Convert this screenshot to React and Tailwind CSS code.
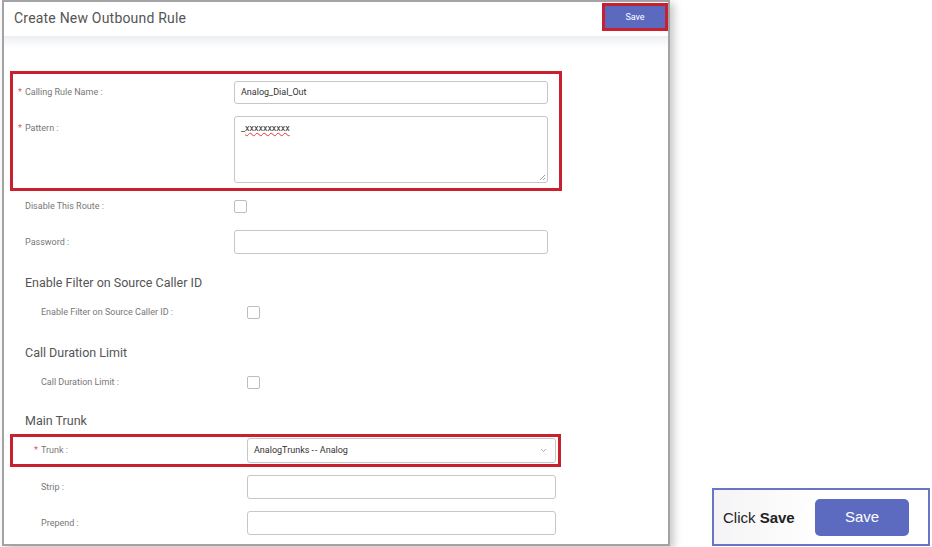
import React from "react";

const F = { fontFamily: "Roboto, 'Noto Sans', sans-serif" };

function Star() {
  return <span className="text-[#e5536b] mr-[3px] text-[9px]">*</span>;
}

function Input({ w = "w-[314px]", h = "h-[24px]", children }) {
  return (
    <div className={`${w} ${h} border border-[#c6c6c6] rounded-[3px] bg-white flex items-center px-[6px] text-[9px] text-[#333]`}>
      {children}
    </div>
  );
}

function Check() {
  return <div className="w-[13px] h-[13px] border border-[#bdbdbd] rounded-[2px] bg-white" />;
}

function Heading({ children, mt }) {
  return (
    <div className={`${mt} h-[20px] flex items-center pl-[21px] text-[12.5px] text-[#555]`}>{children}</div>
  );
}

export default function App() {
  return (
    <div className="w-[932px] h-[547px] bg-white flex overflow-hidden" style={F}>
      <div className="ml-[2px] w-[668px] h-[546px] border-2 border-[#a3a3a3] bg-white shadow-[4px_3px_8px_rgba(0,0,0,0.22)] flex flex-col overflow-hidden shrink-0">
        {/* header */}
        <div className="h-[34px] flex items-start justify-between">
          <div className="pl-[10px] pt-[6px] text-[14px] text-[#555] tracking-[0.2px]">Create New Outbound Rule</div>
          <div className="mt-[1px] w-[66px] h-[28px] border-[3px] border-[#c8202f] bg-white">
            <div className="w-full h-full bg-[#5b6abf] flex items-center justify-center text-white text-[9px] pt-[2px]">Save</div>
          </div>
        </div>
        <div className="h-[12px] bg-gradient-to-b from-[#eceef2] to-white" />

        {/* red box 1 */}
        <div className="mt-[23px] ml-[6px] w-[552px] border-[3px] border-[#c8202f] pt-[7px] pb-[5px] flex flex-col gap-[12px]">
          <div className="flex items-center h-[23px]">
            <div className="pl-[5px] w-[221px] text-[9px] text-[#777] flex items-center pt-[1px]"><Star />Calling Rule Name :</div>
            <Input h="h-[23px]">Analog_Dial_Out</Input>
          </div>
          <div className="flex items-start h-[67px]">
            <div className="pl-[5px] w-[221px] text-[9px] text-[#777] flex items-center pt-[6px]"><Star />Pattern :</div>
            <div className="relative w-[314px] h-[67px] border border-[#c6c6c6] rounded-[3px] bg-white px-[6px] pt-[5px] text-[9px] text-[#333]">
              _<span className="underline decoration-wavy decoration-[#e03a3a] decoration-1">xxxxxxxxxx</span>
              <svg className="absolute right-[1px] bottom-[1px]" width="7" height="7" viewBox="0 0 7 7">
                <path d="M6 1 L1 6 M6 4 L4 6" stroke="#888" strokeWidth="0.8" />
              </svg>
            </div>
          </div>
        </div>

        {/* disable */}
        <div className="mt-[3px] h-[24px] flex items-center">
          <div className="pl-[21px] w-[230px] text-[9px] text-[#777] pt-[1px]">Disable This Route :</div>
          <Check />
        </div>
        {/* password */}
        <div className="mt-[12px] h-[24px] flex items-center">
          <div className="pl-[21px] w-[230px] text-[9px] text-[#777] pt-[1px]">Password :</div>
          <Input />
        </div>

        <Heading mt="mt-[19px]">Enable Filter on Source Caller ID</Heading>
        <div className="mt-[7px] h-[24px] flex items-center">
          <div className="pl-[37px] w-[243px] text-[9px] text-[#777] pt-[1px]">Enable Filter on Source Caller ID :</div>
          <Check />
        </div>

        <Heading mt="mt-[19px]">Call Duration Limit</Heading>
        <div className="mt-[7px] h-[24px] flex items-center">
          <div className="pl-[37px] w-[243px] text-[9px] text-[#777] pt-[1px]">Call Duration Limit :</div>
          <Check />
        </div>

        <Heading mt="mt-[17px]">Main Trunk</Heading>
        {/* red box 2 */}
        <div className="mt-[3px] ml-[6px] w-[551px] border-[3px] border-[#c8202f] py-[1px] flex items-center">
          <div className="pl-[21px] w-[234px] text-[9px] text-[#777] flex items-center pt-[1px]"><Star />Trunk :</div>
          <div className="w-[309px] h-[25px] border border-[#c6c6c6] rounded-[3px] bg-white flex items-center justify-between px-[6px] text-[9px] text-[#333]">
            <span>AnalogTrunks -<span className="ml-[1px]">-</span> Analog</span>
            <svg width="7" height="5" viewBox="0 0 7 5" className="mr-[2px]">
              <path d="M1 1 L3.5 3.5 L6 1" fill="none" stroke="#999" strokeWidth="0.8" />
            </svg>
          </div>
        </div>
        <div className="mt-[8px] h-[24px] flex items-center">
          <div className="pl-[37px] w-[243px] text-[9px] text-[#777] pt-[1px]">Strip :</div>
          <Input w="w-[309px]" />
        </div>
        <div className="mt-[12px] h-[24px] flex items-center">
          <div className="pl-[37px] w-[243px] text-[9px] text-[#777] pt-[1px]">Prepend :</div>
          <Input w="w-[309px]" />
        </div>
      </div>

      {/* callout */}
      <div className="ml-[42px] self-end mb-[1px] w-[218px] h-[58px] border-2 border-[#6874c4] bg-gradient-to-r from-[#f4f4f6] via-white to-white flex items-center shrink-0" style={{ fontFamily: "'Liberation Sans', Arial, sans-serif" }}>
        <div className="pl-[9px] pt-[2px] text-[15px] text-[#222]">Click <b>Save</b></div>
        <div className="ml-auto mr-[19px] w-[94px] h-[37px] rounded-[5px] bg-[#5c6bc0] text-white text-[15px] flex items-center justify-center">Save</div>
      </div>
    </div>
  );
}
